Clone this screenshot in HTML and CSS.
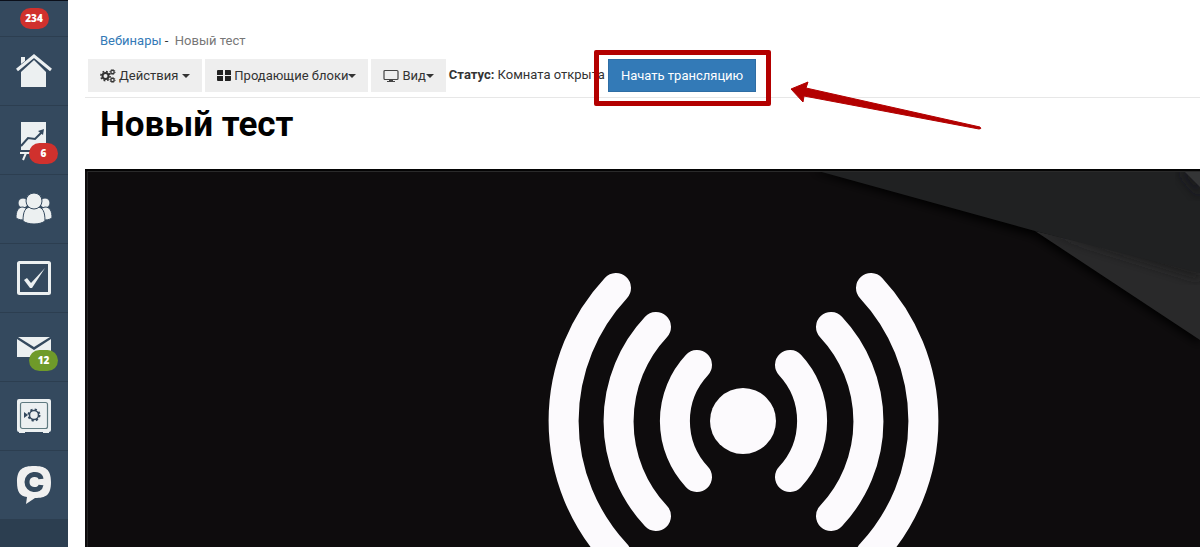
FILE: index.html
```html
<!DOCTYPE html>
<html lang="ru">
<head>
  <meta charset="UTF-8">
  <meta name="viewport" content="width=device-width, initial-scale=1.0">
  <title>Новый тест</title>
  <link rel="stylesheet" href="styles.css">
</head>
<body>
<div class="page">

  <nav class="sidebar">
    <a href="#" class="side-item side-profile" aria-label="Профиль">
      <span class="badge">234</span>
    </a>
    <a href="#" class="side-item" aria-label="Главная">
      <svg width="36" height="36" viewBox="0 0 36 36">
        <path fill="#ecf0f1" d="M5 11V4h4v4z"/>
        <path fill="#ecf0f1" d="M5 19 18 7l12 12v15H5z"/>
        <path fill="none" stroke="#34495e" stroke-width="2" d="M2 19 18 5l16 14"/>
        <path fill="none" stroke="#ecf0f1" stroke-width="3" d="M1 17 18 3l17 14"/>
      </svg>
    </a>
    <a href="#" class="side-item" aria-label="Статистика">
      <svg width="36" height="36" viewBox="0 0 36 36">
        <path fill="#ecf0f1" d="M5 0h25v28H5z"/>
        <path fill="none" stroke="#34495e" stroke-width="2" d="M5 24l7-8 7 1 7-7"/>
        <path fill="#34495e" d="M22 9l6-2-1 6z"/>
        <path fill="none" stroke="#ecf0f1" stroke-width="2" d="M4 31h10M10 31l-3 7"/>
      </svg>
      <span class="badge badge-corner">6</span>
    </a>
    <a href="#" class="side-item" aria-label="Ученики">
      <svg width="36" height="36" viewBox="0 0 36 36">
        <g fill="#ecf0f1" stroke="#34495e" stroke-width="1">
          <circle cx="7" cy="12" r="5"/>
          <circle cx="29" cy="12" r="5"/>
          <path d="M0 27c0-7 2-11 7-11l5 2-3 11c-3 0-6 0-9-2z"/>
          <path d="M36 27c0-7-2-11-7-11l-5 2 3 11c3 0 6 0 9-2z"/>
          <path d="M7 30c0-9 2-14 8-14h6c6 0 8 5 8 14-5 4-17 4-22 0z"/>
          <circle cx="18" cy="10" r="8"/>
        </g>
      </svg>
    </a>
    <a href="#" class="side-item" aria-label="Задачи">
      <svg width="36" height="36" viewBox="0 0 36 36">
        <rect x="2.500" y="2.500" width="31" height="31" rx="1" fill="none" stroke="#ecf0f1" stroke-width="3"/>
        <path fill="#ecf0f1" d="M8 20l3-2 4 5L29 8 16 28h-2z"/>
      </svg>
    </a>
    <a href="#" class="side-item" aria-label="Сообщения">
      <svg width="36" height="36" viewBox="0 0 36 36">
        <path fill="#ecf0f1" d="M2 8h32L18 18zM1 10l17 11 17-11v18H1z"/>
      </svg>
      <span class="badge badge-corner badge-green">12</span>
    </a>
    <a href="#" class="side-item" aria-label="Финансы">
      <svg width="36" height="36" viewBox="0 0 36 36">
        <path fill="#ecf0f1" d="M3 1h30q2 0 2 2v29q0 2-2 2v1h-6v-1H9v1H3v-1q-2 0-2-2V3q0-2 2-2z"/>
        <rect x="4.500" y="4.500" width="27" height="26" rx="2" fill="none" stroke="#5f7a80" stroke-width="1.200"/>
        <path fill="#34495e" d="M8 14l4 3-4 3z"/>
        <circle cx="18" cy="17" r="4.500" fill="none" stroke="#34495e" stroke-width="1.500"/>
        <circle cx="18" cy="17" r="5.500" fill="none" stroke="#34495e" stroke-width="2" stroke-dasharray="2.200 2.120"/>
      </svg>
    </a>
    <a href="#" class="side-item" aria-label="Чат">
      <svg width="36" height="40" viewBox="0 0 36 40">
        <path fill="#f0f0f0" d="M18 1C29 1 35 4 35 17s-5 16-16 16l-9 6 1-7C4 31 1 27 1 17 1 4 7 1 18 1z"/>
        <path fill="none" stroke="#34495e" stroke-width="5" d="M25 14c-1-7-14-6-14 3s13 10 14 3"/>
      </svg>
    </a>
  </nav>

  <main class="content">
    <div class="breadcrumb">
      <a href="#">Вебинары</a> <span class="sep">-</span>&nbsp; <span>Новый тест</span>
    </div>

    <div class="toolbar">
      <button type="button" class="btn">
        <svg width="16" height="14" viewBox="0 0 16 14" fill="none" stroke="#333">
          <circle cx="5.500" cy="7" r="3" stroke-width="2"/>
          <circle cx="5.500" cy="7" r="4.600" stroke-width="1.600" stroke-dasharray="1.800 1.800"/>
          <circle cx="12.500" cy="3" r="1.700" stroke-width="1.300"/>
          <circle cx="12.500" cy="3" r="2.600" stroke-dasharray="1 1"/>
          <circle cx="12.500" cy="11" r="1.700" stroke-width="1.300"/>
          <circle cx="12.500" cy="11" r="2.600" stroke-dasharray="1 1"/>
        </svg>
        <span>Действия</span> <i class="caret caret-gap"></i>
      </button>
      <button type="button" class="btn">
        <svg width="14" height="14" viewBox="0 0 14 14" fill="#222">
          <path d="M1 1h5v5H0V2q0-1 1-1zM8 1h5q1 0 1 1v4H8zM0 7h6v5H1q-1 0-1-1zM8 7h6v4q0 1-1 1H8z"/>
        </svg>
        <span>Продающие блоки</span><i class="caret"></i>
      </button>
      <button type="button" class="btn">
        <svg width="16" height="14" viewBox="0 0 16 14">
          <rect x="1" y="1.500" width="14" height="9" rx="1" fill="none" stroke="#444" stroke-width="1.200"/>
          <path fill="#444" d="M6 11h4v1h2v1H4v-1h2z"/>
        </svg>
        <span>Вид</span><i class="caret"></i>
      </button>
      <span class="status"><b>Статус:</b> Комната открыта</span>
      <div class="start">
        <button type="button" class="btn btn-primary">Начать трансляцию</button>
        <span class="frame"></span>
        <svg class="arrow" width="194" height="52" viewBox="786 80 194 52">
          <path fill="#b30000" stroke="#b30000" stroke-linejoin="round" d="M789 89l17-7-2 6 174 39q2 2-1 2L802 96l-1 6z"/>
        </svg>
      </div>
    </div>

    <h1>Новый тест</h1>

    <div class="player">
      <svg viewBox="85 169 1115 378" preserveAspectRatio="xMidYMin slice">
        <defs>
          <filter id="soft" x="-10%" y="-10%" width="120%" height="120%">
            <feGaussianBlur stdDeviation="5"/>
          </filter>
        </defs>
        <rect x="85" y="169" width="1115" height="378" fill="#0e0c0d"/>
        <path fill="#050506" filter="url(#soft)" d="M810 171l225 65 165 108V169z"/>
        <path fill="#29292a" d="M1035 231l165 109v-70z"/>
        <path fill="#1b1b1c" opacity=".7" filter="url(#soft)" d="M1045 232l155 48v-20z"/>
        <path fill="#202122" d="M818 171l217 60 165 42V171z"/>
        <path fill="#18181a" opacity=".7" filter="url(#soft)" d="M1178 171l22 27v-27z"/>
        <path fill="#343536" d="M1184 171l16 16v-16z"/>
        <path stroke="#050505" stroke-width="2" d="M85 170h1115"/>
        <path stroke="#2a2a2a" d="M87 171.500h1113"/>
        <path stroke="#242424" d="M87.500 171v376"/>
        <!-- broadcast sign -->
        <circle cx="743" cy="421" r="33" fill="#fcfafd"/>
        <g fill="none" stroke="#fcfafd" stroke-width="30" stroke-linecap="round">
          <path d="M697 365a82 82 0 0 0 0 112M656 327a138 138 0 0 0 0 189M616 288a195 195 0 0 0 0 266"/>
          <path d="M790 365a82 82 0 0 1 0 112M831 327a138 138 0 0 1 0 189M871 288a195 195 0 0 1 0 266"/>
        </g>
      </svg>
    </div>
  </main>

</div>
</body>
</html>
```
FILE: styles.css
```css
* {
  box-sizing: border-box;
}

body {
  margin: 0;
  font-family: Roboto, "Noto Sans", sans-serif;
  font-size: 13px;
  line-height: 20px;
  color: #333;
  background: #fff;
}

a {
  color: #337ab7;
  text-decoration: none;
}

.page {
  display: flex;
  height: 100vh;
  overflow: hidden;
}

/* sidebar */
.sidebar {
  flex: none;
  width: 68px;
  background: #2c3e50;
}

.side-item {
  position: relative;
  display: flex;
  align-items: center;
  justify-content: center;
  height: 69px;
  background: #34495e;
  border-bottom: 1px solid #2c3e50;
}

.side-item svg {
  overflow: visible;
}

.side-profile {
  height: 37px;
  border-top: 1px solid #0b0f1a;
}

.badge {
  min-width: 29px;
  height: 21px;
  border-radius: 11px;
  background: #d0312d;
  color: #fff;
  font-family: "Open Sans", sans-serif;
  font-size: 10px;
  font-weight: 800;
  line-height: 21px;
  text-align: center;
}

.badge-corner {
  position: absolute;
  right: 10px;
  bottom: 10px;
}

.badge-green {
  background: #6f9a2a;
}

/* content */
.content {
  flex: 1;
  min-width: 0;
  display: flex;
  flex-direction: column;
  padding: 31px 0 0 17px;
}

.breadcrumb {
  padding: 0 15px;
  color: #777;
}

.sep {
  color: #333;
}

.toolbar {
  display: flex;
  gap: 3px;
  padding: 8px 3px 5px;
  border-bottom: 1px solid #e7e7e7;
}

.btn {
  display: flex;
  align-items: center;
  height: 33px;
  padding: 0 12px;
  border: 0;
  background: #eee;
  color: #333;
  font: inherit;
  white-space: nowrap;
  cursor: pointer;
}

.btn svg {
  margin-right: 3px;
}

.btn-primary {
  background: #337ab7;
  border: 1px solid #2e6da4;
  color: #fff;
}

.caret {
  border-top: 4px solid #333;
  border-left: 4px solid transparent;
  border-right: 4px solid transparent;
}

.caret-gap {
  margin-left: 4px;
}

.status {
  line-height: 32px;
  white-space: nowrap;
}

.start {
  position: relative;
}

/* highlight over the start button */
.frame {
  position: absolute;
  inset: -9px -15px -14px -14px;
  border: 5px solid #b30000;
  border-radius: 2px;
  pointer-events: none;
}

.arrow {
  position: absolute;
  left: 100%;
  top: 21px;
  margin-left: 32px;
}

h1 {
  margin: 7px 15px 24px;
  font-size: 35px;
  font-weight: bold;
  line-height: 40px;
  color: #000;
}

.player {
  flex: 1;
  min-height: 0;
  background: #0e0c0d;
}

.player svg {
  display: block;
  width: 100%;
  height: 100%;
}
```
